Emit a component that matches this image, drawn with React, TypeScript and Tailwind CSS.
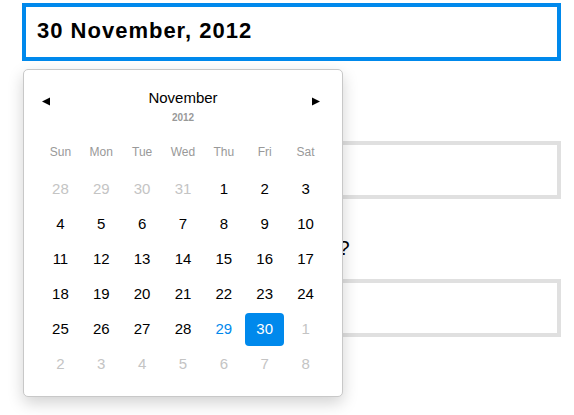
import React from 'react';

const weekdays = ['Sun', 'Mon', 'Tue', 'Wed', 'Thu', 'Fri', 'Sat'];

type Day = { n: number; out?: boolean; today?: boolean; selected?: boolean };

const weeks: Day[][] = [
  [{ n: 28, out: true }, { n: 29, out: true }, { n: 30, out: true }, { n: 31, out: true }, { n: 1 }, { n: 2 }, { n: 3 }],
  [{ n: 4 }, { n: 5 }, { n: 6 }, { n: 7 }, { n: 8 }, { n: 9 }, { n: 10 }],
  [{ n: 11 }, { n: 12 }, { n: 13 }, { n: 14 }, { n: 15 }, { n: 16 }, { n: 17 }],
  [{ n: 18 }, { n: 19 }, { n: 20 }, { n: 21 }, { n: 22 }, { n: 23 }, { n: 24 }],
  [{ n: 25 }, { n: 26 }, { n: 27 }, { n: 28 }, { n: 29, today: true }, { n: 30, selected: true }, { n: 1, out: true }],
  [{ n: 2, out: true }, { n: 3, out: true }, { n: 4, out: true }, { n: 5, out: true }, { n: 6, out: true }, { n: 7, out: true }, { n: 8, out: true }],
];

function Arrow({ dir }: { dir: 'prev' | 'next' }) {
  return (
    <svg width="9" height="9" viewBox="0 0 9 9" className="block">
      {dir === 'prev' ? <polygon points="0,4.5 8,0.5 8,8.5" fill="#000" /> : <polygon points="9,4.5 1,0.5 1,8.5" fill="#000" />}
    </svg>
  );
}

function DatePicker() {
  return (
    <div className="absolute left-[23px] top-[69px] w-[320px] h-[328px] bg-white border border-[#c8c8c8] rounded-[5px] shadow-[0_6px_16px_rgba(0,0,0,0.18)] px-4 pt-[18px]">
      <div className="grid grid-cols-[24px_1fr_24px] items-start">
        <button className="mt-[9px] ml-[2px] w-[9px] h-[9px]">
          <Arrow dir="prev" />
        </button>
        <div className="flex flex-col items-center">
          <div className="text-[15px] leading-[20px] text-black">November</div>
          <div className="mt-[4px] text-[10px] leading-[12px] font-bold text-[#999]">2012</div>
        </div>
        <button className="mt-[9px] ml-[9px] w-[9px] h-[9px]">
          <Arrow dir="next" />
        </button>
      </div>

      <div className="grid grid-cols-7 mt-[18px] h-[20px] items-center">
        {weekdays.map((w) => (
          <div key={w} className="text-center text-[12px] text-[#999]">
            {w}
          </div>
        ))}
      </div>

      <div className="mt-[9.5px]">
        {weeks.map((week, i) => (
          <div key={i} className="grid grid-cols-7 h-[35px]">
            {week.map((d, j) => (
              <div key={j} className="flex items-center justify-center px-[1px] py-[1px]">
                <div
                  className={
                    'w-full h-full flex items-center justify-center rounded-[4px] text-[15px] ' +
                    (d.selected
                      ? 'bg-[#0089ec] text-white'
                      : d.today
                        ? 'text-[#0089ec]'
                        : d.out
                          ? 'text-[#c4c4c4]'
                          : 'text-black')
                  }
                >
                  {d.n}
                </div>
              </div>
            ))}
          </div>
        ))}
      </div>
    </div>
  );
}

export default function App() {
  return (
    <div className="relative min-h-screen bg-white font-['Liberation_Sans',Arial,sans-serif] text-black">
      <div className="pl-[22px] pr-[13px] pt-[3px]">
        <div className="h-[58px] border-4 border-[#0089ec] flex items-center pl-[11px] pb-[4px] text-[22px] font-bold tracking-[1px]">
          30 November, 2012
        </div>
        <div className="h-[80px]" />
        <div className="ml-[4px] h-[58px] border-4 border-[#e0e0e0]" />
        <div className="h-[80px] pt-[38px] pl-[2px] text-[20px] leading-[22px] whitespace-nowrap">What time would you like us to start?</div>
        <div className="ml-[4px] h-[58px] border-4 border-[#e0e0e0]" />
      </div>
      <DatePicker />
    </div>
  );
}
